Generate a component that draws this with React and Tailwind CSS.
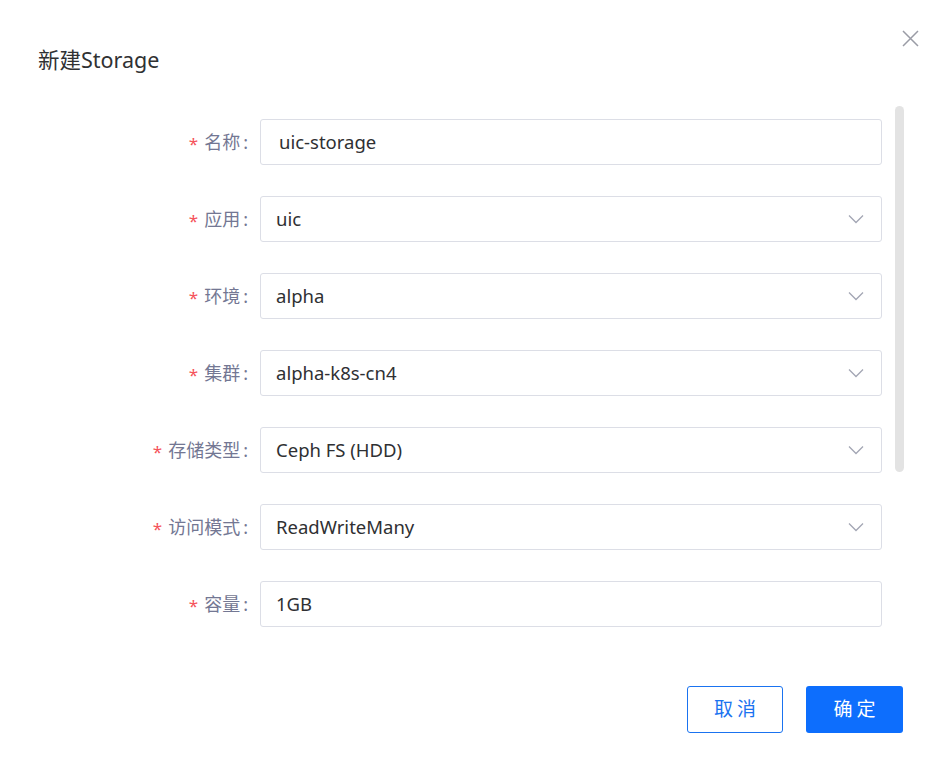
import React from 'react';

const fields = [
  { label: '名称', value: 'uic-storage', select: false, pad: 'pl-[18px]' },
  { label: '应用', value: 'uic', select: true },
  { label: '环境', value: 'alpha', select: true },
  { label: '集群', value: 'alpha-k8s-cn4', select: true },
  { label: '存储类型', value: 'Ceph FS (HDD)', select: true },
  { label: '访问模式', value: 'ReadWriteMany', select: true },
  { label: '容量', value: '1GB', select: false },
];

const Chevron = () => (
  <svg width="16" height="10" viewBox="0 0 16 10" fill="none" className="shrink-0">
    <path d="M1 1.5 L8 8.5 L15 1.5" stroke="#a3a6b4" strokeWidth="1.3" />
  </svg>
);

const App = () => {
  return (
    <div
      className="w-[940px] h-[780px] bg-white relative overflow-hidden"
      style={{ fontFamily: '"Noto Sans", "Noto Sans CJK SC", sans-serif' }}
    >
      {/* header */}
      <div className="flex justify-between h-[106px] pl-[38px] pr-[21px]">
        <h2 className="pt-[46px] text-[21.5px] leading-[28px] text-[#303133]">新建Storage</h2>
        <button className="mt-[30px] w-[17px] h-[17px] text-[#9a9ca6]">
          <svg width="17" height="17" viewBox="0 0 17 17" fill="none">
            <path d="M1 1 L16 16 M16 1 L1 16" stroke="currentColor" strokeWidth="1.5" />
          </svg>
        </button>
      </div>

      {/* body */}
      <div className="flex">
        <div className="flex flex-col gap-[31px] pt-[13px]">
          {fields.map((f) => (
            <div key={f.label} className="flex items-center">
              <label className="w-[250px] pr-[2px] flex justify-end items-center text-[18px] text-[#737793]">
                <span className="text-[#f5535b] text-[17px] mr-[6px] mt-[3px]">*</span>
                <span>{f.label}</span>
                <span className="ml-[3px]">:</span>
              </label>
              <div
                className={`ml-[10px] w-[622px] h-[46px] border border-[#dcdee6] rounded-[3px] flex items-center justify-between ${
                  f.pad || 'pl-[15px]'
                } pr-[17px] text-[18.5px] text-[#2f3033]`}
              >
                <span>{f.value}</span>
                {f.select && <Chevron />}
              </div>
            </div>
          ))}
        </div>
        <div className="ml-[13px] w-[9px] h-[366px] rounded-full bg-[#e3e3e3]" />
      </div>

      {/* footer */}
      <div className="flex justify-end gap-[23px] pr-[37px] mt-[59px]">
        <button className="w-[96px] h-[47px] border border-[#1a73f0] rounded-[3px] text-[#1a73f0] text-[19px] tracking-[4px] pl-[4px] bg-white">
          取消
        </button>
        <button className="w-[97px] h-[47px] rounded-[3px] bg-[#0d6efd] text-white text-[19px] tracking-[4px] pl-[4px]">
          确定
        </button>
      </div>
    </div>
  );
};

export default App;
